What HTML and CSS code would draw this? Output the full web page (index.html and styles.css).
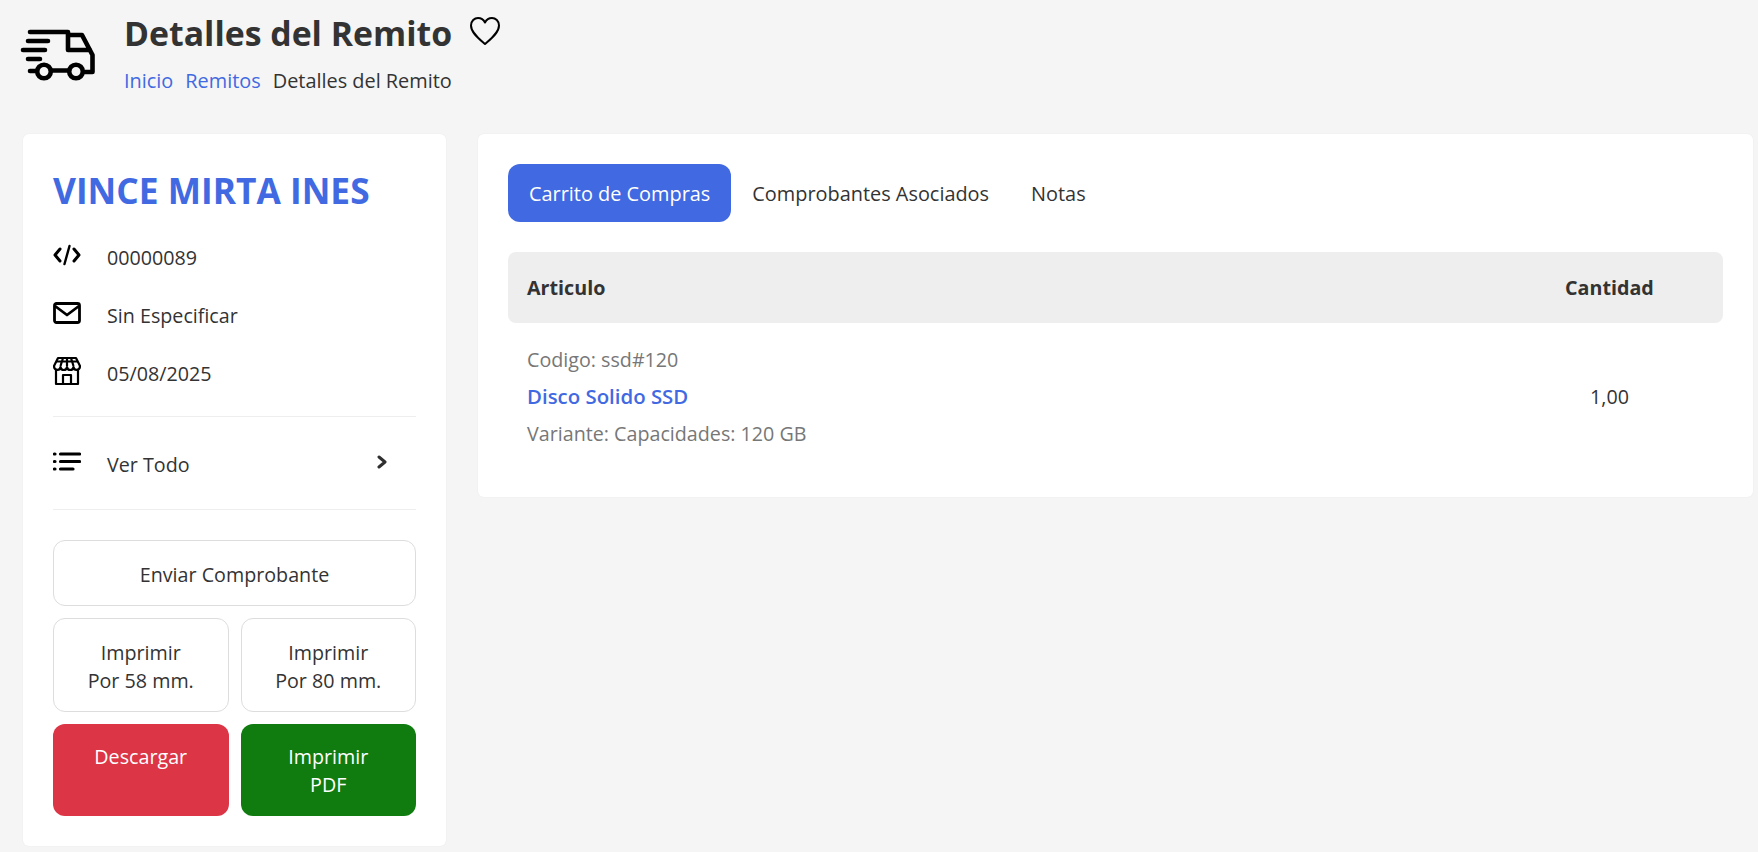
FILE: index.html
```html
<!DOCTYPE html>
<html lang="es">
<head>
<meta charset="utf-8">
<title>Detalles del Remito</title>
<link rel="stylesheet" href="styles.css">
</head>
<body>
<header class="page-head">
  <svg class="truck" viewBox="0 0 90 75" fill="none" stroke="#000" stroke-width="4.600" stroke-linecap="round" stroke-linejoin="round">
    <path d="M15 17H53V35H75M53 20H67L77.500 40V57H70"/>
    <path d="M13 26H33M8 35H30M13 44H25M15 56H22"/>
    <path d="M36 55.500H54"/>
    <circle cx="29" cy="56.500" r="6.800"/>
    <circle cx="61" cy="56.500" r="6.800"/>
  </svg>
  <div class="head-text">
    <div class="title-row">
      <h1>Detalles del Remito</h1>
      <svg class="heart" viewBox="0 0 32 30" fill="none" stroke="#000" stroke-width="2" stroke-linejoin="round">
        <path d="M16 28C11 23.500 2 17 2 9.500C2 5 5.500 2 9 2C12 2 14.500 3.500 16 6.500C17.500 3.500 20 2 23 2C26.500 2 30 5 30 9.500C30 17 21 23.500 16 28Z"/>
      </svg>
    </div>
    <nav class="crumbs"><a>Inicio</a><a>Remitos</a><span>Detalles del Remito</span></nav>
  </div>
</header>
<main class="layout">
  <aside class="card side">
    <h2>VINCE MIRTA INES</h2>
    <ul class="info">
      <li><svg class="ico" viewBox="0 0 28 22" fill="none" stroke="#000" stroke-width="3" stroke-linecap="round" stroke-linejoin="round"><path d="M7 5L2 11L7 17M21 5L26 11L21 17"/><path d="M16.500 2L11.500 20" stroke-width="2.400"/></svg><span>00000089</span></li>
      <li><svg class="ico" viewBox="0 0 28 22" fill="none" stroke="#000" stroke-width="2.800" stroke-linejoin="round"><rect x="1.500" y="1.500" width="25" height="19" rx="2"/><path d="M2 4L14 13L26 4"/></svg><span>Sin Especificar</span></li>
      <li><svg class="ico shop" viewBox="0 0 28 30" fill="none" stroke="#000" stroke-width="2.200" stroke-linejoin="round"><path d="M3 14V28H25V14"/><path d="M5 2H23L27 10C27 15 21 15 20.500 11C20 15 14.500 15 14 11C13.500 15 8 15 7.500 11C7 15 1 15 1 10Z"/><path d="M3 5.500H25M10 2L7.500 10M14 2V10M18 2L20.500 10"/><path d="M10 28V19H18V28"/></svg><span>05/08/2025</span></li>
    </ul>
    <div class="more">
      <svg class="ico" viewBox="0 0 28 20" fill="none" stroke="#000" stroke-width="3.200" stroke-linecap="round"><path d="M7.500 2H26.500M7.500 9.500H26.500M7.500 17H20"/><path d="M1.500 2H2M1.500 9.500H2M1.500 17H2"/></svg>
      <span>Ver Todo</span>
      <svg class="chev" viewBox="0 0 10 14" fill="none" stroke="#2f2f2f" stroke-width="3" stroke-linecap="round" stroke-linejoin="round"><path d="M2 2L8 7L2 12"/></svg>
    </div>
    <div class="actions">
      <button class="btn wide">Enviar Comprobante</button>
      <button class="btn">Imprimir<br>Por 58 mm.</button>
      <button class="btn">Imprimir<br>Por 80 mm.</button>
      <button class="btn solid red">Descargar</button>
      <button class="btn solid green">Imprimir<br>PDF</button>
    </div>
  </aside>
  <section class="card content">
    <div class="tabs">
      <a class="tab active">Carrito de Compras</a>
      <a class="tab">Comprobantes Asociados</a>
      <a class="tab">Notas</a>
    </div>
    <div class="thead"><span>Articulo</span><span class="qty">Cantidad</span></div>
    <div class="row">
      <div class="item">
        <p class="muted">Codigo: ssd#120</p>
        <a class="name">Disco Solido SSD</a>
        <p class="muted">Variante: Capacidades: 120 GB</p>
      </div>
      <div class="qty amount">1,00</div>
    </div>
  </section>
</main>
</body>
</html>
```
FILE: styles.css
```css
* { box-sizing: border-box; }
html, body { height: 100%; }
body {
  margin: 0;
  background: #f5f5f5;
  color: #333;
  font-family: "Open Sans", "Noto Sans", sans-serif;
  font-size: 19.7px;
  overflow: hidden;
}
.page-head {
  display: flex;
  align-items: flex-start;
  height: 134px;
  padding-left: 15px;
}
.truck { width: 90px; height: 75px; margin-top: 15px; flex: none; }
.head-text { margin-left: 19px; padding-top: 9px; }
.title-row { display: flex; align-items: flex-start; }
h1 { margin: 0; font-size: 33.8px; line-height: 48px; font-weight: 700; color: #333; }
.heart { width: 32px; height: 30px; margin: 7px 0 0 17px; }
.crumbs { display: flex; gap: 12px; margin-top: 10px; line-height: 28px; font-size: 19.9px; }
.crumbs a { color: #4169e1; }
.layout {
  display: grid;
  grid-template-columns: 423px 1275px;
  column-gap: 32px;
  align-items: start;
  padding-left: 23px;
}
.card { background: #fff; border-radius: 6px; padding: 30px; box-shadow: 0 0 2px rgba(0,0,0,.06); }
.side { height: 712px; }
h2 { margin: 0; font-size: 35.3px; line-height: 52px; font-weight: 700; color: #4169e1; }
.info { list-style: none; margin: 12px 0 0; padding: 0; }
.info li { display: flex; align-items: center; height: 58px; }
.ico { width: 28px; height: 22px; flex: none; margin-right: 26px; margin-top: -4px; }
.shop { height: 30px; }
.more {
  display: flex;
  align-items: center;
  height: 94px;
  margin-top: 14px;
  padding-top: 2px;
  border-top: 1px solid #eee;
  border-bottom: 1px solid #eee;
}
.more .ico { height: 20px; }
.chev { width: 10px; height: 14px; margin: -4px 29px 0 auto; }
.actions {
  display: grid;
  grid-template-columns: 1fr 1fr;
  gap: 12px;
  margin-top: 30px;
}
.btn {
  font: inherit;
  line-height: 28px;
  color: #333;
  background: #fff;
  border: 1px solid #ddd;
  border-radius: 12px;
  padding: 3px 0 0;
  height: 94px;
}
.wide { grid-column: 1 / -1; height: 66px; }
.solid {
  display: flex;
  flex-direction: column;
  align-items: center;
  justify-content: flex-start;
  height: 92px;
  padding-top: 19px;
  border: 0;
  color: #fff;
}
.btn.red { background: #dc3545; }
.btn.green { background: #107c10; }
.tabs { display: flex; font-size: 19.9px; }
.tab { padding: 16px 21px 14px; line-height: 28px; height: 58px; border-radius: 12px; }
.tab.active { background: #4169e1; color: #fff; }
.thead {
  display: flex;
  justify-content: space-between;
  align-items: center;
  height: 71px;
  margin-top: 30px;
  padding: 0 71px 0 19px;
  background: #eee;
  border-radius: 8px;
  font-weight: 700;
}
.qty { width: 87px; text-align: center; white-space: nowrap; }
.row { display: flex; justify-content: space-between; padding: 18px 70px 15px 19px; }
.item { line-height: 37px; }
.muted { margin: 0; color: #777; }
.name { color: #4169e1; font-weight: 600; font-size: 20.4px; display: block; }
.amount { align-self: center; }
```
